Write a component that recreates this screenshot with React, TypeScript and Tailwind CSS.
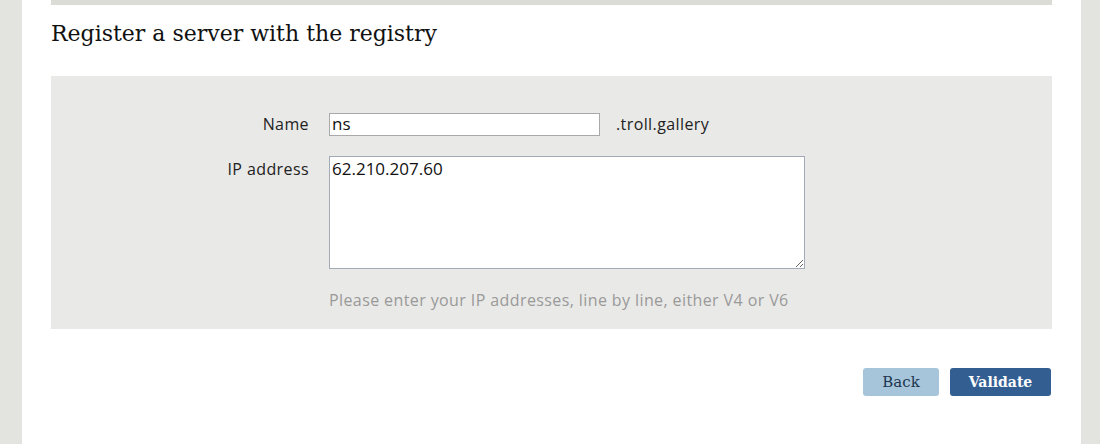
export default function App() {
  return (
    <div className="flex min-h-[444px] bg-[#e3e3df] font-['Open_Sans',sans-serif]">
      <div className="w-[22px] shrink-0 bg-[#e3e3df]" />
      <main className="flex-1 bg-white px-[29px] pb-12">
        <div className="h-[5px] bg-[#dcdcd7]" />
        <h1 className="mt-[14px] font-['DejaVu_Serif',serif] text-[22px] leading-[30px] text-[#111]">
          Register a server with the registry
        </h1>
        <form className="mt-[27px] bg-[#e9e9e7] pt-[36px] pb-[17px]">
          <div className="flex items-center">
            <label className="w-[258px] text-right text-[16px] tracking-[0.4px] text-[#222]">Name</label>
            <input
              defaultValue="ns"
              className="ml-[20px] h-[23px] w-[271px] border border-[#a9a9a9] bg-white px-[2px] text-[17px] text-[#111] outline-none"
            />
            <span className="ml-[16px] text-[16px] tracking-[0.4px] text-[#222]">.troll.gallery</span>
          </div>
          <div className="mt-[20px] flex items-start">
            <label className="w-[258px] pt-[1px] text-right text-[16px] tracking-[0.4px] text-[#222]">IP address</label>
            <div className="ml-[20px]">
              <textarea
                defaultValue="62.210.207.60"
                className="block h-[113px] w-[476px] resize border border-[#a3abb9] bg-white px-[2px] py-[1px] text-[17px] leading-[22px] text-[#111] outline-none"
              />
              <p className="mt-[19px] text-[16px] tracking-[0.4px] text-[#999]">
                Please enter your IP addresses, line by line, either V4 or V6
              </p>
            </div>
          </div>
        </form>
        <div className="mt-[39px] flex justify-end gap-[11px] pr-[1px]">
          <button className="h-[28px] w-[76px] rounded-[3px] bg-[#a6c5da] font-['DejaVu_Serif',serif] text-[15px] text-[#1e3550]">
            Back
          </button>
          <button className="h-[28px] w-[101px] rounded-[3px] bg-[#335e92] font-['DejaVu_Serif',serif] text-[14px] font-bold text-white">
            Validate
          </button>
        </div>
      </main>
      <div className="w-[19px] shrink-0 bg-[#e3e3df]" />
    </div>
  );
}
